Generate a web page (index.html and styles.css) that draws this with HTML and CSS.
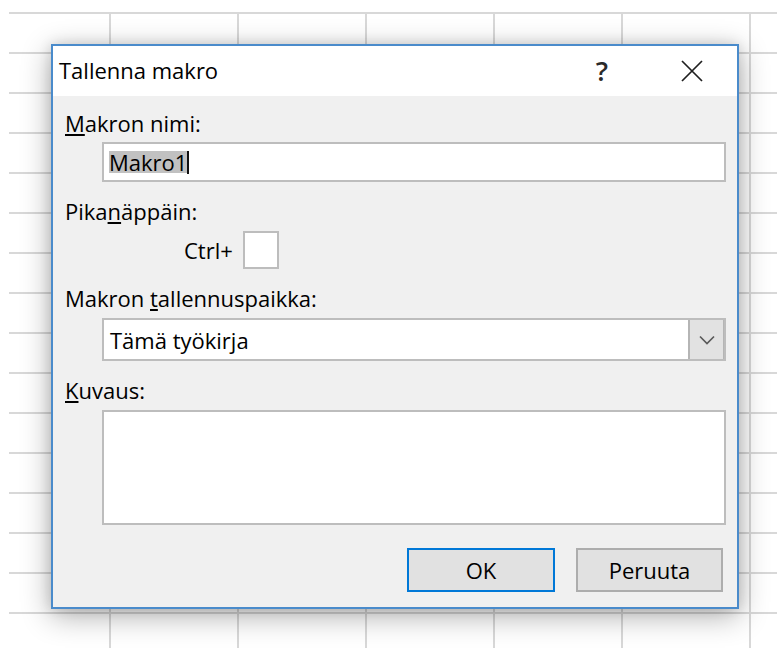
FILE: index.html
```html
<!DOCTYPE html>
<html lang="fi">
<head>
<meta charset="utf-8">
<title>Tallenna makro</title>
<link rel="stylesheet" href="styles.css">
</head>
<body>
<div class="sheet">
  <div class="dialog">
    <div class="titlebar">
      <span class="title">Tallenna makro</span>
      <span class="tb-btn help">?</span>
      <span class="tb-btn close">
        <svg width="22" height="22" viewBox="0 0 22 22" aria-hidden="true">
          <path d="M1 1 L21 21 M21 1 L1 21" stroke="#1f1f1f" stroke-width="1.7" fill="none"/>
        </svg>
      </span>
    </div>
    <div class="content">
      <div class="label first"><u class="key">M</u>akron nimi:</div>
      <div class="field textbox"><span class="sel">Makro1</span><span class="caret"></span></div>

      <div class="label">Pika<u class="key">n</u>äppäin:</div>
      <div class="hotkey"><span class="ctrl">Ctrl+</span><span class="keybox"></span></div>

      <div class="label">Makron <u class="key">t</u>allennuspaikka:</div>
      <div class="field combo">
        <span class="combo-text">Tämä työkirja</span>
        <span class="combo-btn">
          <svg width="16" height="10" viewBox="0 0 16 10" aria-hidden="true">
            <path d="M1 1.5 L8 8.5 L15 1.5" stroke="#5a5a5a" stroke-width="1.7" fill="none"/>
          </svg>
        </span>
      </div>

      <div class="label"><u class="key">K</u>uvaus:</div>
      <div class="field textarea"></div>

      <div class="actions">
        <button class="btn default" type="button">OK</button>
        <button class="btn cancel" type="button">Peruuta</button>
      </div>
    </div>
  </div>
</div>
</body>
</html>
```
FILE: styles.css
```css
html, body {
  margin: 0;
  padding: 0;
  background: #ffffff;
  width: 777px;
  height: 648px;
  overflow: hidden;
}

body {
  font-family: "Open Sans", "Noto Sans", sans-serif;
  font-size: 22px;
  color: #000;
}

/* spreadsheet grid behind the dialog */
.sheet {
  margin: 12px 0 0 9px;
  height: 636px;
  overflow: hidden;
  padding-top: 32px;
  box-sizing: border-box;
  background-color: #fff;
  background-image:
    linear-gradient(to right, #d8d8d8 2px, transparent 2px),
    linear-gradient(to bottom, #d8d8d8 2px, transparent 2px);
  background-size: 128px 40px, 128px 40px;
  background-position: 100px 0, 0 0;
}

.dialog {
  margin-left: 42px;
  width: 688px;
  box-sizing: border-box;
  border: 2px solid #4a8bcb;
  background: #f0f0f0;
  box-shadow: 0 7px 28px rgba(0, 0, 0, 0.32), 0 0 12px rgba(0, 0, 0, 0.12);
}

.titlebar {
  height: 50px;
  background: #fff;
  display: flex;
  align-items: center;
}

.title {
  flex: 1;
  padding-left: 6px;
  padding-bottom: 2px;
  line-height: 30px;
}

.tb-btn {
  width: 90px;
  height: 50px;
  display: flex;
  align-items: center;
  justify-content: center;
}

.help {
  font-size: 27px;
  font-weight: 600;
  color: #2a2a2a;
  padding-bottom: 2px;
  box-sizing: border-box;
}

.close svg {
  display: block;
}

.content {
  padding: 12px 11px 15px 12px;
  display: flex;
  flex-direction: column;
}

.label {
  line-height: 30px;
  height: 30px;
  margin-top: 14px;
  white-space: nowrap;
}

.label.first {
  margin-top: 0;
}

.key {
  text-decoration-thickness: 1.5px;
  text-underline-offset: 2px;
}

.field {
  margin-left: 37px;
  box-sizing: border-box;
  border: 2px solid #bdbdbd;
  background: #fff;
}

.textbox {
  margin-top: 4px;
  height: 40px;
  display: flex;
  align-items: center;
  padding-left: 5px;
}

/* inactive selection over the default macro name */
.sel {
  display: inline-block;
  height: 22px;
  line-height: 22px;
  background: #c1c1c1;
}

.caret {
  display: inline-block;
  width: 2px;
  height: 23px;
  background: #111;
}

.hotkey {
  margin-top: 5px;
  margin-left: 119px;
  display: flex;
  align-items: center;
}

.ctrl {
  line-height: 30px;
}

.keybox {
  margin-left: 10px;
  width: 36px;
  height: 38px;
  box-sizing: border-box;
  border: 2px solid #bdbdbd;
  background: #fff;
}

.combo {
  margin-top: 5px;
  height: 43px;
  display: flex;
}

.combo-text {
  flex: 1;
  display: flex;
  align-items: center;
  padding-left: 6px;
  padding-top: 1px;
}

.combo-btn {
  width: 33px;
  background: #e2e2e2;
  border-left: 2px solid #b5b5b5;
  border-right: 1px solid #b5b5b5;
  display: flex;
  align-items: center;
  justify-content: center;
}

.textarea {
  margin-top: 5px;
  height: 115px;
}

.actions {
  margin-top: 23px;
  display: flex;
  justify-content: flex-end;
  gap: 21px;
  padding-right: 3px;
}

.btn {
  font: inherit;
  color: #000;
  height: 44px;
  box-sizing: border-box;
  background: #e1e1e1;
  border: 2px solid #adadad;
  padding: 0;
  margin: 0;
  line-height: 30px;
}

.btn.default {
  width: 148px;
  border-color: #0078d7;
}

.btn.cancel {
  width: 147px;
}
```
